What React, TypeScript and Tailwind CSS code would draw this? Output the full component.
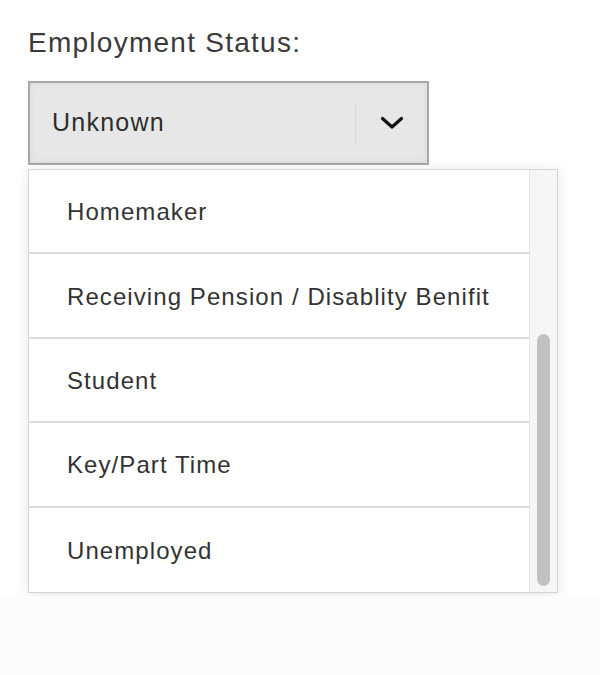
import React from 'react';

const options = [
  'Homemaker',
  'Receiving Pension / Disablity Benifit',
  'Student',
  'Key/Part Time',
  'Unemployed',
];

export default function App() {
  return (
    <div
      className="flex min-h-[675px] w-[600px] flex-col bg-white text-[#333]"
      style={{ fontFamily: '"Liberation Sans", Arial, sans-serif' }}
    >
      <div className="pl-[28px] pt-[27px] pb-[3px]">
        <label className="block text-[28px] leading-[32px] tracking-[0.045em] text-[#3a3a3a]">Employment Status:</label>

        {/* select box */}
        <div className="mt-[22px] flex h-[84px] w-[401px] items-center border-2 border-[#a8a8a8] bg-[#e7e7e7] shadow-[inset_0_0_6px_rgba(0,0,0,0.06)]">
          <span className="flex-1 pl-[22px] text-[25px] tracking-[0.05em] text-[#2e2e2e]">Unknown</span>
          <div className="h-[37px] w-px bg-[#d6d6d6]" />
          <div className="flex w-[71px] items-center justify-center">
            <svg width="24" height="14" viewBox="0 0 24 14" fill="none">
              <path d="M2.5 2.5 L12 11 L21.5 2.5" stroke="#111" strokeWidth="3.2" strokeLinecap="round" strokeLinejoin="round" />
            </svg>
          </div>
        </div>

        {/* dropdown list */}
        <div className="mt-[4px] flex h-[424px] w-[530px] border border-[#d5d5d5] bg-white shadow-[0_2px_14px_rgba(0,0,0,0.10)]">
          <ul className="flex-1">
            {options.map((opt, i) => (
              <li
                key={opt}
                className={`flex h-[84.4px] items-center pl-[38px] pt-[2px] text-[24px] tracking-[0.045em] text-[#333] ${
                  i < options.length - 1 ? 'border-b-2 border-[#dcdcdc]' : ''
                }`}
              >
                {opt}
              </li>
            ))}
          </ul>
          {/* scrollbar */}
          <div className="flex w-[28px] flex-col border-l border-[#e6e6e6] bg-[#f6f6f6] px-[7px] pb-[6px] pt-[164px]">
            <div className="flex-1 rounded-full bg-[#c1c1c1]" />
          </div>
        </div>
      </div>
      <div className="flex-1 bg-[#fcfcfc]" />
    </div>
  );
}
